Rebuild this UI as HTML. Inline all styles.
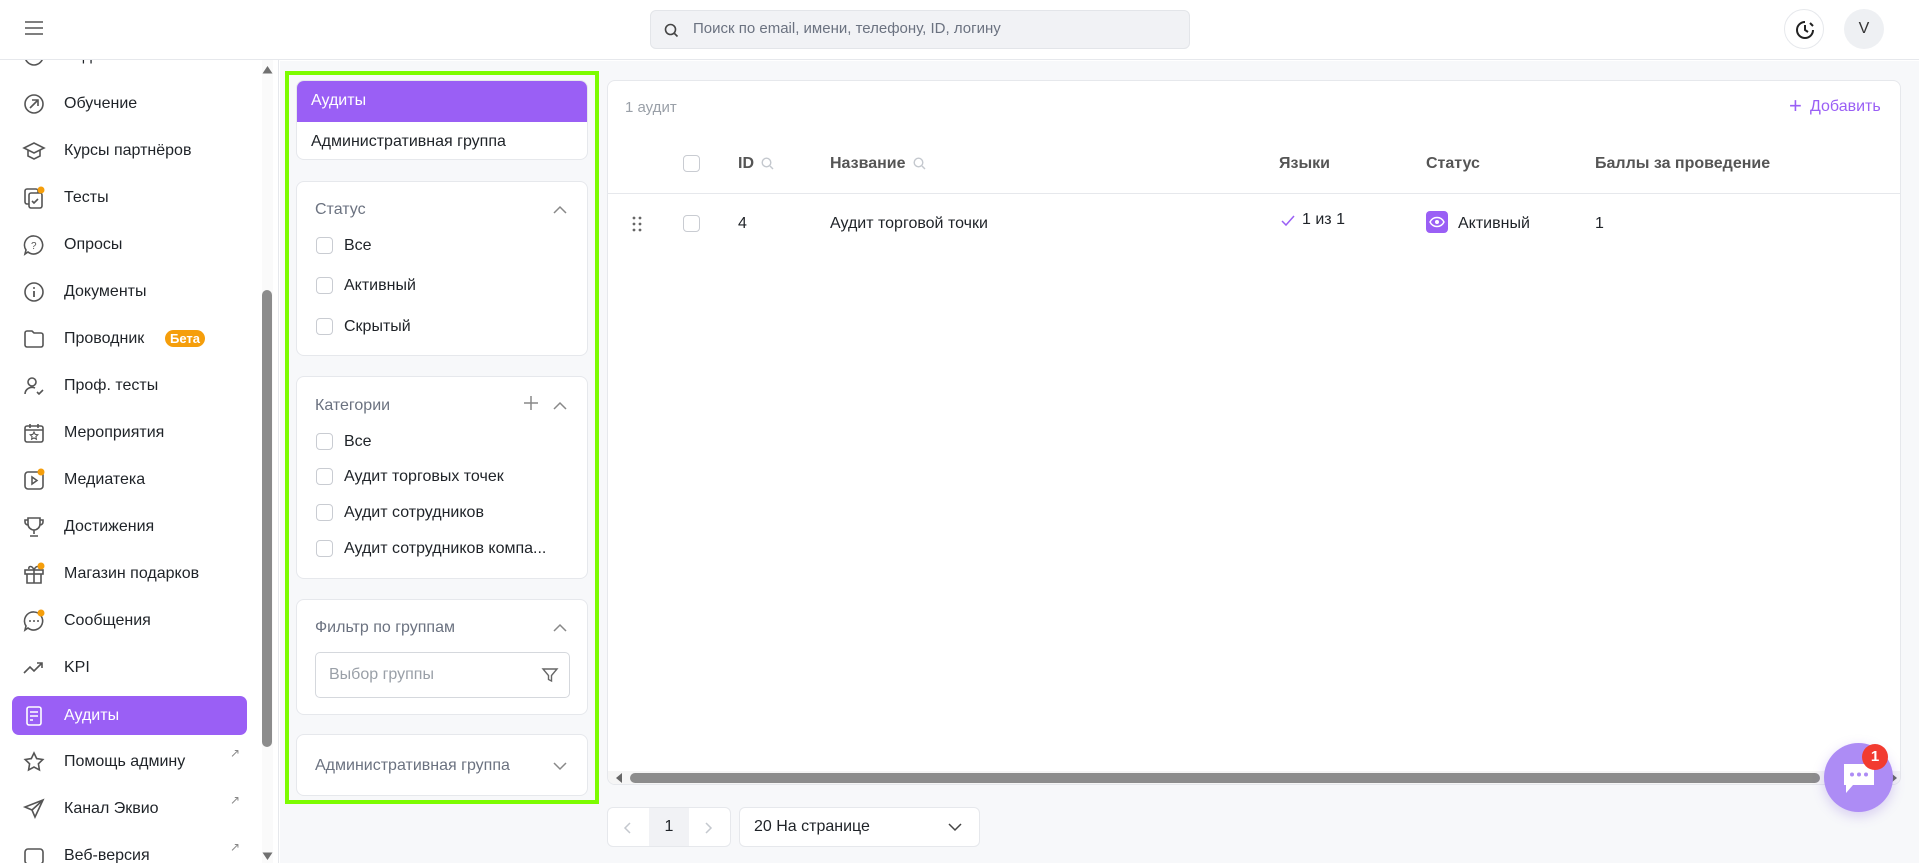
<!DOCTYPE html>
<html><head><meta charset="utf-8">
<style>
*{box-sizing:border-box;margin:0;padding:0}
body{width:1919px;height:863px;overflow:hidden;font-family:"Liberation Sans",Arial,sans-serif;font-size:16px;color:#1f2328;background:#fff;position:relative}
.a{position:absolute}
.hdr{left:0;top:0;width:1919px;height:60px;background:#fff;border-bottom:1px solid #e6e8ec}
.side{left:0;top:60px;width:279px;height:803px;background:#fff;border-right:1px solid #e6e8ec;overflow:hidden}
.it{position:absolute;left:0;width:262px;height:40px;display:flex;align-items:center}
.it .ic{position:absolute;left:22px;width:24px;height:24px}
.it .t{position:absolute;left:64px}
.ext{position:absolute;left:230px;top:4px;font-size:12px;color:#888}
.main{left:280px;top:61px;width:1639px;height:802px;background:#f7f8fa}
.card{position:absolute;background:#fff;border:1px solid #e6e8ec;border-radius:8px}
.cb{position:absolute;width:17px;height:17px;border:1px solid #c9ccd2;border-radius:4px;background:#fff}
.ft{position:absolute;color:#6b7280}
.lab{position:absolute;left:342px}
</style></head><body>
<div class="a hdr">
  <svg class="a" style="left:24px;top:20px" width="20" height="16" viewBox="0 0 20 16"><path d="M1 2h18M1 8h18M1 14h18" stroke="#555" stroke-width="1.6"/></svg>
  <div class="a" style="left:650px;top:10px;width:540px;height:39px;background:#f1f2f5;border:1px solid #e3e5e9;border-radius:6px">
    <svg class="a" style="left:13px;top:12px" width="15" height="15" viewBox="0 0 15 15"><circle cx="6.5" cy="6.5" r="5" fill="none" stroke="#444" stroke-width="1.6"/><path d="M10.5 10.5l3 3" stroke="#444" stroke-width="1.6"/></svg>
    <span class="a" style="left:42px;top:9px;font-size:15px;color:#6b7280">Поиск по email, имени, телефону, ID, логину</span>
  </div>
  <div class="a" style="left:1784px;top:9px;width:40px;height:40px;border-radius:50%;border:1px solid #e6e8ec;background:#fff">
    <svg class="a" style="left:9px;top:9px" width="22" height="22" viewBox="0 0 22 22"><path d="M11 3a8 8 0 1 0 8 8" fill="none" stroke="#222" stroke-width="2"/><path d="M11 6v5l3 2" fill="none" stroke="#222" stroke-width="2"/><path d="M16 4l3 3" stroke="#222" stroke-width="2"/></svg>
  </div>
  <div class="a" style="left:1844px;top:9px;width:40px;height:40px;border-radius:50%;background:#eef0f3;text-align:center;line-height:40px;font-size:16px;color:#333">V</div>
</div>

<div class="a side">
  <div class="it" style="top:-24px"><svg class="ic" viewBox="0 0 24 24"><circle cx="12" cy="12" r="9" fill="none" stroke="#555" stroke-width="1.6"/></svg><span class="t">Задания</span></div>
  <div class="it" style="top:24px"><svg class="ic" viewBox="0 0 24 24"><circle cx="12" cy="12" r="9" fill="none" stroke="#555" stroke-width="1.6"/><path d="M8 16l8-8M10 8h6v6" fill="none" stroke="#555" stroke-width="1.6"/></svg><span class="t">Обучение</span></div>
  <div class="it" style="top:71px"><svg class="ic" viewBox="0 0 24 24"><path d="M2 9l10-5 10 5-10 5zM6 11v6l6 3 6-3v-6" fill="none" stroke="#555" stroke-width="1.6"/></svg><span class="t">Курсы партнёров</span></div>
  <div class="it" style="top:118px"><svg class="ic" viewBox="0 0 24 24"><rect x="3" y="3" width="13" height="15" rx="2" fill="none" stroke="#555" stroke-width="1.6"/><rect x="7" y="7" width="13" height="15" rx="2" fill="#fff" stroke="#555" stroke-width="1.6"/><path d="M10 15l2 2 4-4" fill="none" stroke="#555" stroke-width="1.6"/><circle cx="19" cy="4" r="3.5" fill="#f59e0b"/></svg><span class="t">Тесты</span></div>
  <div class="it" style="top:165px"><svg class="ic" viewBox="0 0 24 24"><path d="M12 3a9 9 0 1 1-6 16l-3 2 1-4A9 9 0 0 1 12 3z" fill="none" stroke="#555" stroke-width="1.6"/><text x="9" y="16" font-size="10" fill="#555" font-family="Liberation Sans">?</text></svg><span class="t">Опросы</span></div>
  <div class="it" style="top:212px"><svg class="ic" viewBox="0 0 24 24"><circle cx="12" cy="12" r="9" fill="none" stroke="#555" stroke-width="1.6"/><path d="M12 11v6" stroke="#555" stroke-width="1.8"/><circle cx="12" cy="8" r="1" fill="#555"/></svg><span class="t">Документы</span></div>
  <div class="it" style="top:259px"><svg class="ic" viewBox="0 0 24 24"><path d="M3 6a2 2 0 0 1 2-2h5l2 2h7a2 2 0 0 1 2 2v10a2 2 0 0 1-2 2H5a2 2 0 0 1-2-2z" fill="none" stroke="#555" stroke-width="1.6"/></svg><span class="t">Проводник</span><span class="a" style="left:165px;top:11px;background:#f59e0b;color:#fff;font-size:13px;font-weight:bold;padding:1px 5px;border-radius:9px">Бета</span></div>
  <div class="it" style="top:306px"><svg class="ic" viewBox="0 0 24 24"><circle cx="10" cy="8" r="4" fill="none" stroke="#555" stroke-width="1.6"/><path d="M3 20a7 7 0 0 1 10-6M15 18l2 2 4-4" fill="none" stroke="#555" stroke-width="1.6"/></svg><span class="t">Проф. тесты</span></div>
  <div class="it" style="top:353px"><svg class="ic" viewBox="0 0 24 24"><rect x="3" y="5" width="18" height="16" rx="2" fill="none" stroke="#555" stroke-width="1.6"/><path d="M3 9h18M8 3v4M16 3v4" stroke="#555" stroke-width="1.6"/><path d="M12 11l1.2 2.4 2.6.4-1.9 1.8.5 2.6-2.4-1.3-2.4 1.3.5-2.6-1.9-1.8 2.6-.4z" fill="none" stroke="#555" stroke-width="1.1"/></svg><span class="t">Мероприятия</span></div>
  <div class="it" style="top:400px"><svg class="ic" viewBox="0 0 24 24"><rect x="3" y="4" width="18" height="17" rx="3" fill="none" stroke="#555" stroke-width="1.6"/><path d="M10 9v7l5-3.5z" fill="none" stroke="#555" stroke-width="1.5"/><circle cx="19" cy="4" r="3.5" fill="#f59e0b"/></svg><span class="t">Медиатека</span></div>
  <div class="it" style="top:447px"><svg class="ic" viewBox="0 0 24 24"><path d="M6 3h12v6a6 6 0 0 1-12 0zM12 15v4M8 21h8M6 5H3v2a3 3 0 0 0 3 3M18 5h3v2a3 3 0 0 1-3 3" fill="none" stroke="#555" stroke-width="1.6"/></svg><span class="t">Достижения</span></div>
  <div class="it" style="top:494px"><svg class="ic" viewBox="0 0 24 24"><rect x="3" y="8" width="18" height="4" fill="none" stroke="#555" stroke-width="1.6"/><path d="M5 12v9h14v-9M12 8v13M12 8c-2-5-6-4-5-1M12 8c2-5 6-4 5-1" fill="none" stroke="#555" stroke-width="1.6"/><circle cx="19" cy="4" r="3.5" fill="#f59e0b"/></svg><span class="t">Магазин подарков</span></div>
  <div class="it" style="top:541px"><svg class="ic" viewBox="0 0 24 24"><path d="M12 3a9 9 0 1 1-6 16l-3 2 1-4A9 9 0 0 1 12 3z" fill="none" stroke="#555" stroke-width="1.6"/><path d="M8 12h.01M12 12h.01M16 12h.01" stroke="#555" stroke-width="2" stroke-linecap="round"/><circle cx="19" cy="4" r="3.5" fill="#f59e0b"/></svg><span class="t">Сообщения</span></div>
  <div class="it" style="top:588px"><svg class="ic" viewBox="0 0 24 24"><path d="M2 17l6-6 4 4 8-8M15 7h5v5" fill="none" stroke="#555" stroke-width="1.6"/></svg><span class="t">KPI</span></div>
  <div class="a" style="left:12px;top:636px;width:235px;height:39px;background:#9a5ff5;border-radius:7px"></div>
  <div class="it" style="top:636px;color:#fff"><svg class="ic" viewBox="0 0 24 24"><rect x="5" y="3" width="14" height="18" rx="2" fill="none" stroke="#fff" stroke-width="1.6"/><path d="M8 8h8M8 12h8M8 16h3" stroke="#fff" stroke-width="1.6"/></svg><span class="t">Аудиты</span></div>
  <div class="it" style="top:682px"><svg class="ic" viewBox="0 0 24 24"><path d="M12 3l2.7 5.6 6.1.9-4.4 4.3 1 6.1L12 17l-5.4 2.9 1-6.1-4.4-4.3 6.1-.9z" fill="none" stroke="#555" stroke-width="1.6"/></svg><span class="t">Помощь админу</span><span class="ext">↗</span></div>
  <div class="it" style="top:729px"><svg class="ic" viewBox="0 0 24 24"><path d="M21 3L3 10l7 3 3 7zM10 13l11-10" fill="none" stroke="#555" stroke-width="1.6"/></svg><span class="t">Канал Эквио</span><span class="ext">↗</span></div>
  <div class="it" style="top:776px"><svg class="ic" viewBox="0 0 24 24"><rect x="3" y="5" width="18" height="15" rx="3" fill="none" stroke="#555" stroke-width="1.6"/></svg><span class="t">Веб-версия</span><span class="ext">↗</span></div>
  <div class="a" style="left:262px;top:0;width:11px;height:803px;background:#fafafa"></div>
  <div class="a" style="left:262px;top:230px;width:10px;height:457px;background:#8c8c8c;border-radius:5px"></div>
  <svg class="a" style="left:262px;top:5px" width="11" height="9"><path d="M0.5 8.5L5.5 1l5 7.5z" fill="#707070"/></svg>
  <svg class="a" style="left:262px;top:792px" width="11" height="9"><path d="M0.5 0.5L5.5 8l5-7.5z" fill="#707070"/></svg>
</div>

<div class="a main">
  <!-- green box -->
  <div class="a" style="left:5px;top:10px;width:314px;height:733px;border:4px solid #7cfc00"></div>
  <div class="card" style="left:16px;top:19px;width:292px;height:80px;overflow:hidden">
    <div class="a" style="left:0;top:0;width:292px;height:41px;background:#9a5ff5;color:#fff;padding:11px 14px">Аудиты</div>
    <div class="a" style="left:14px;top:52px">Административная группа</div>
  </div>
  <div class="card" style="left:16px;top:120px;width:292px;height:175px">
    <span class="ft" style="left:18px;top:19px">Статус</span>
    <svg class="a" style="left:256px;top:23px" width="14" height="9"><path d="M1 8l6-6 6 6" fill="none" stroke="#888" stroke-width="1.5"/></svg>
    <div class="cb" style="left:19px;top:55px"></div><span class="a" style="left:47px;top:55px">Все</span>
    <div class="cb" style="left:19px;top:95px"></div><span class="a" style="left:47px;top:95px">Активный</span>
    <div class="cb" style="left:19px;top:136px"></div><span class="a" style="left:47px;top:136px">Скрытый</span>
  </div>
  <div class="card" style="left:16px;top:315px;width:292px;height:203px">
    <span class="ft" style="left:18px;top:20px">Категории</span>
    <svg class="a" style="left:227px;top:19px" width="14" height="14"><path d="M7 0v14M0 7h14" stroke="#888" stroke-width="1.5"/></svg>
    <svg class="a" style="left:256px;top:24px" width="14" height="9"><path d="M1 8l6-6 6 6" fill="none" stroke="#888" stroke-width="1.5"/></svg>
    <div class="cb" style="left:19px;top:56px"></div><span class="a" style="left:47px;top:56px">Все</span>
    <div class="cb" style="left:19px;top:91px"></div><span class="a" style="left:47px;top:91px">Аудит торговых точек</span>
    <div class="cb" style="left:19px;top:127px"></div><span class="a" style="left:47px;top:127px">Аудит сотрудников</span>
    <div class="cb" style="left:19px;top:163px"></div><span class="a" style="left:47px;top:163px">Аудит сотрудников компа...</span>
  </div>
  <div class="card" style="left:16px;top:538px;width:292px;height:116px">
    <span class="ft" style="left:18px;top:19px">Фильтр по группам</span>
    <svg class="a" style="left:256px;top:23px" width="14" height="9"><path d="M1 8l6-6 6 6" fill="none" stroke="#888" stroke-width="1.5"/></svg>
    <div class="a" style="left:18px;top:52px;width:255px;height:46px;border:1px solid #d5d8dd;border-radius:5px">
      <span class="a" style="left:13px;top:13px;color:#9aa0a8">Выбор группы</span>
      <svg class="a" style="left:225px;top:13px" width="18" height="18" viewBox="0 0 18 18"><path d="M2 3h14l-5.5 6.5V15l-3-1.5v-4z" fill="none" stroke="#666" stroke-width="1.4"/></svg>
    </div>
  </div>
  <div class="card" style="left:16px;top:673px;width:292px;height:62px">
    <span class="ft" style="left:18px;top:22px">Административная группа</span>
    <svg class="a" style="left:256px;top:27px" width="14" height="9"><path d="M1 1l6 6 6-6" fill="none" stroke="#888" stroke-width="1.5"/></svg>
  </div>

  <!-- table -->
  <div class="card" style="left:327px;top:19px;width:1294px;height:705px;overflow:hidden">
    <span class="a" style="left:17px;top:18px;font-size:15px;color:#9aa0a8">1 аудит</span>
    <span class="a" style="left:1181px;top:16px;color:#9a5ff5;font-size:22px;line-height:18px">+</span>
    <span class="a" style="left:1202px;top:17px;color:#9a5ff5">Добавить</span>
    <div class="cb" style="left:75px;top:74px"></div>
    <span class="a" style="left:130px;top:74px;color:#555;font-weight:bold">ID</span>
    <svg class="a" style="left:153px;top:76px" width="13" height="13"><circle cx="5.5" cy="5.5" r="4.3" fill="none" stroke="#c4c8ce" stroke-width="1.4"/><path d="M9 9l3 3" stroke="#c4c8ce" stroke-width="1.4"/></svg>
    <span class="a" style="left:222px;top:74px;color:#555;font-weight:bold">Название</span>
    <svg class="a" style="left:305px;top:76px" width="13" height="13"><circle cx="5.5" cy="5.5" r="4.3" fill="none" stroke="#c4c8ce" stroke-width="1.4"/><path d="M9 9l3 3" stroke="#c4c8ce" stroke-width="1.4"/></svg>
    <span class="a" style="left:671px;top:74px;color:#555;font-weight:bold">Языки</span>
    <span class="a" style="left:818px;top:74px;color:#555;font-weight:bold">Статус</span>
    <span class="a" style="left:987px;top:74px;color:#555;font-weight:bold">Баллы за проведение</span>
    <div class="a" style="left:0;top:112px;width:1294px;height:1px;background:#e6e8ec"></div>
    <svg class="a" style="left:24px;top:135px" width="10" height="16"><g fill="#666"><circle cx="2" cy="2" r="1.4"/><circle cx="8" cy="2" r="1.4"/><circle cx="2" cy="8" r="1.4"/><circle cx="8" cy="8" r="1.4"/><circle cx="2" cy="14" r="1.4"/><circle cx="8" cy="14" r="1.4"/></g></svg>
    <div class="cb" style="left:75px;top:134px"></div>
    <span class="a" style="left:130px;top:134px">4</span>
    <span class="a" style="left:222px;top:134px">Аудит торговой точки</span>
    <svg class="a" style="left:673px;top:134px" width="14" height="12"><path d="M1 6l4 4 8-9" fill="none" stroke="#9a5ff5" stroke-width="1.5"/></svg>
    <span class="a" style="left:694px;top:130px">1 из 1</span>
    <div class="a" style="left:818px;top:130px;width:22px;height:22px;background:#9a5ff5;border-radius:4px">
      <svg class="a" style="left:3px;top:5px" width="16" height="12"><path d="M1 6c3-6 11-6 14 0c-3 6-11 6-14 0z" fill="none" stroke="#fff" stroke-width="1.4"/><circle cx="8" cy="6" r="2" fill="#fff"/></svg>
    </div>
    <span class="a" style="left:850px;top:134px">Активный</span>
    <span class="a" style="left:987px;top:134px">1</span>
    <div class="a" style="left:0;top:690px;width:1294px;height:15px;background:#f5f5f5"></div>
    <svg class="a" style="left:7px;top:692px" width="8" height="10"><path d="M7 0v10L1 5z" fill="#666"/></svg>
    <div class="a" style="left:22px;top:692px;width:1190px;height:10px;background:#8c8c8c;border-radius:5px"></div>
    <svg class="a" style="left:1282px;top:692px" width="8" height="10"><path d="M1 0v10l6-5z" fill="#666"/></svg>
  </div>

  <!-- pagination -->
  <div class="a" style="left:327px;top:746px;width:124px;height:40px;background:#fff;border:1px solid #e6e8ec;border-radius:6px;overflow:hidden">
    <svg class="a" style="left:15px;top:14px" width="8" height="12"><path d="M7 1L2 6l5 5" fill="none" stroke="#c4c8ce" stroke-width="1.5"/></svg>
    <div class="a" style="left:41px;top:0;width:40px;height:40px;background:#f1f2f5;text-align:center;line-height:38px">1</div>
    <svg class="a" style="left:97px;top:14px" width="8" height="12"><path d="M1 1l5 5-5 5" fill="none" stroke="#c4c8ce" stroke-width="1.5"/></svg>
  </div>
  <div class="a" style="left:459px;top:746px;width:241px;height:40px;background:#fff;border:1px solid #e6e8ec;border-radius:6px">
    <span class="a" style="left:14px;top:10px">20 На странице</span>
    <svg class="a" style="left:208px;top:15px" width="14" height="9"><path d="M1 1l6 6 6-6" fill="none" stroke="#444" stroke-width="1.5"/></svg>
  </div>
</div>

<!-- chat -->
<div class="a" style="left:1824px;top:743px;width:69px;height:69px;border-radius:50%;background:#ad8cf5;box-shadow:0 4px 12px rgba(120,80,220,.25)">
  <svg class="a" style="left:17px;top:18px" width="36" height="34" viewBox="0 0 36 34"><path d="M3 3h30v21H12l-7 8v-8H3z" fill="#fff"/><g fill="#ad8cf5"><circle cx="11" cy="13.5" r="2"/><circle cx="18" cy="13.5" r="2"/><circle cx="25" cy="13.5" r="2"/></g></svg>
</div>
<div class="a" style="left:1862px;top:744px;width:26px;height:26px;border-radius:50%;background:#f23b30;color:#fff;text-align:center;line-height:26px;font-size:15px;font-weight:bold">1</div>
</body></html>
